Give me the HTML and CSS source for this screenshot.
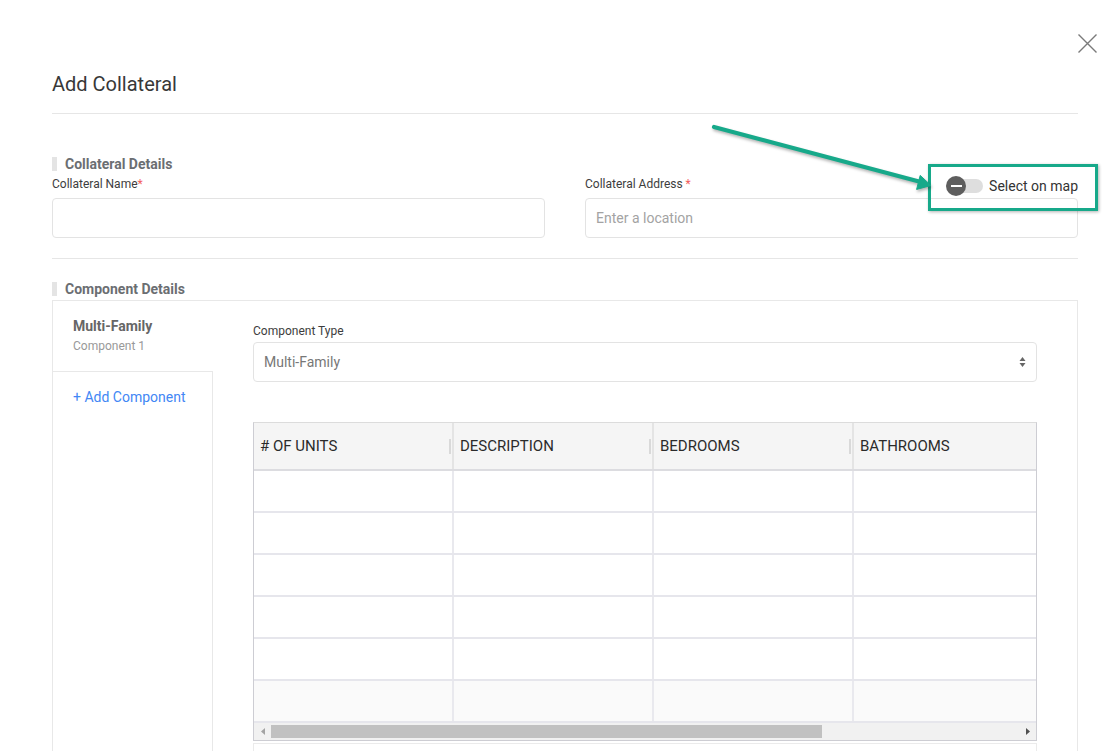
FILE: index.html
```html
<!DOCTYPE html>
<html lang="en">
<head>
<meta charset="utf-8">
<title>Add Collateral</title>
<link rel="stylesheet" href="styles.css">
</head>
<body>
<div class="modal">
  <header class="modal-head">
    <h1 class="modal-title">Add Collateral</h1>
    <button class="close" aria-label="Close">
      <svg width="19" height="19" viewBox="0 0 19 19"><path d="M0.5 0.5 L18.5 18.5 M18.5 0.5 L0.5 18.5" stroke="#7a7a7a" stroke-width="1.4" fill="none"/></svg>
    </button>
  </header>
  <div class="divider"></div>

  <section class="section section-collateral">
    <h2 class="section-title">Collateral Details</h2>
    <div class="field-row">
      <div class="field">
        <div class="label-row">
          <label class="field-label">Collateral Name<span class="req">*</span></label>
        </div>
        <div class="input"></div>
      </div>
      <div class="field">
        <div class="label-row">
          <label class="field-label">Collateral Address <span class="req">*</span></label>
          <div class="map-toggle">
            <span class="switch"><span class="knob"></span></span>
            <span class="toggle-text">Select on map</span>
            <span class="highlight"></span>
          </div>
        </div>
        <div class="input placeholder">Enter a location</div>
      </div>
    </div>
  </section>

  <div class="divider divider-2"></div>

  <section class="section section-components">
    <h2 class="section-title">Component Details</h2>
    <div class="comp-box">
      <nav class="comp-nav">
        <div class="comp-tab">
          <div class="tab-name">Multi-Family</div>
          <div class="tab-sub">Component 1</div>
        </div>
        <div class="comp-nav-rest">
          <a class="add-comp">+ Add Component</a>
        </div>
      </nav>
      <div class="comp-body">
        <label class="field-label">Component Type</label>
        <div class="select">
          <span>Multi-Family</span>
          <svg width="7" height="12" viewBox="0 0 7 12"><path d="M0.5 5 L3.5 1 L6.5 5 Z M0.5 7 L3.5 11 L6.5 7 Z" fill="#666"/></svg>
        </div>
        <div class="grid-wrap">
          <div class="grid-viewport">
            <div class="grid">
              <div class="grid-head">
                <div class="head-cell"><span># OF UNITS</span><i class="handle"></i></div>
                <div class="head-cell"><span>DESCRIPTION</span><i class="handle"></i></div>
                <div class="head-cell"><span>BEDROOMS</span><i class="handle"></i></div>
                <div class="head-cell"><span>BATHROOMS</span><i class="handle"></i></div>
              </div>
              <div class="grid-row"><div class="cell"></div><div class="cell"></div><div class="cell"></div><div class="cell"></div></div>
              <div class="grid-row"><div class="cell"></div><div class="cell"></div><div class="cell"></div><div class="cell"></div></div>
              <div class="grid-row"><div class="cell"></div><div class="cell"></div><div class="cell"></div><div class="cell"></div></div>
              <div class="grid-row"><div class="cell"></div><div class="cell"></div><div class="cell"></div><div class="cell"></div></div>
              <div class="grid-row"><div class="cell"></div><div class="cell"></div><div class="cell"></div><div class="cell"></div></div>
              <div class="grid-row grid-row-hover"><div class="cell"></div><div class="cell"></div><div class="cell"></div><div class="cell"></div></div>
            </div>
          </div>
          <div class="hscroll">
            <span class="sb-btn"><svg width="4" height="7" viewBox="0 0 4 7"><path d="M4 0 L0 3.5 L4 7 Z" fill="#a3a3a3"/></svg></span>
            <span class="sb-thumb"></span>
            <span class="sb-space"></span>
            <span class="sb-btn"><svg width="4" height="7" viewBox="0 0 4 7"><path d="M0 0 L4 3.5 L0 7 Z" fill="#505050"/></svg></span>
          </div>
        </div>
        <div class="below-box"></div>
      </div>
    </div>
  </section>

  <svg class="annotation" width="1112" height="751" viewBox="0 0 1112 751">
    <g fill="#17a98a" stroke="#17a98a">
      <line x1="714" y1="127" x2="919" y2="181.5" stroke-width="4.2" stroke-linecap="round"/>
      <polygon points="931,185.5 916.6,189.4 920.2,175.4" stroke-width="1" stroke-linejoin="round"/>
    </g>
  </svg>
</div>
</body>
</html>
```

FILE: styles.css
```css
* { box-sizing: border-box; }

html, body {
  margin: 0;
  background: #fff;
}

body {
  font-family: Roboto, "Liberation Sans", Arial, sans-serif;
  color: #333;
  overflow: hidden;
}

.modal {
  position: relative;
  height: 751px;
  overflow: hidden;
  padding: 0 34px 0 52px;
}

.modal-head {
  display: flex;
  justify-content: space-between;
  align-items: flex-start;
  padding-top: 34px;
  margin-right: -19px;
}

.modal-title {
  margin: 38px 0 0;
  font-size: 20px;
  line-height: 24px;
  font-weight: 400;
  color: #383838;
}

.close {
  width: 19px;
  height: 19px;
  padding: 0;
  border: 0;
  background: none;
  cursor: pointer;
}

.close svg { display: block; }

.divider {
  height: 1px;
  background: #e6e6e6;
  margin-top: 17px;
}

.divider-2 { margin-top: 20px; }

.section-title {
  display: flex;
  align-items: center;
  margin: 0;
  font-size: 14px;
  line-height: 20px;
  font-weight: 700;
  color: #6b6e72;
}

.section-title::before {
  content: "";
  width: 5px;
  height: 14px;
  margin-right: 8px;
  background: #e4e4e4;
}

.section-collateral { margin-top: 40px; }

.field-row {
  display: grid;
  grid-template-columns: 1fr 1fr;
  column-gap: 40px;
  margin-top: 2px;
}

.label-row {
  display: flex;
  justify-content: space-between;
  align-items: flex-start;
  height: 16px;
}

.field-label {
  display: block;
  font-size: 12px;
  line-height: 16px;
  color: #3d3d3d;
}

.req { color: #f25c5c; }

.input {
  margin-top: 6px;
  height: 40px;
  border: 1px solid #e3e3e3;
  border-radius: 4px;
  padding: 0 10px;
  font-size: 14px;
  line-height: 38px;
  color: #333;
}

.placeholder { color: #a3a3a3; }

.map-toggle {
  position: relative;
  display: flex;
  align-items: center;
  height: 20px;
  font-size: 14px;
  line-height: 20px;
  color: #333;
}

.switch {
  display: flex;
  align-items: center;
  width: 35px;
  height: 14px;
  margin-left: 2px;
  margin-right: 6px;
  border-radius: 7px;
  background: #dedede;
}

.knob {
  display: flex;
  align-items: center;
  justify-content: center;
  flex-shrink: 0;
  width: 20px;
  height: 20px;
  margin-left: -2px;
  border-radius: 50%;
  background: #5e5e5e;
}

.knob::after {
  content: "";
  width: 11px;
  height: 2px;
  background: #fff;
}

.highlight {
  position: absolute;
  top: -12px;
  left: -18px;
  right: -20px;
  bottom: -15px;
  border: 3px solid #17a98a;
  box-shadow: 1px 1px 3px rgba(0, 0, 0, 0.3);
}

.section-components { margin-top: 20px; }

.comp-box {
  display: flex;
  height: 480px;
  margin-top: 1px;
  border: 1px solid #e8e8e8;
}

.comp-nav {
  display: flex;
  flex-direction: column;
  width: 160px;
  flex-shrink: 0;
}

.comp-tab { padding: 15px 20px 17px; }

.tab-name {
  font-size: 14px;
  line-height: 20px;
  font-weight: 700;
  color: #666;
}

.tab-sub {
  margin-top: 2px;
  font-size: 12px;
  line-height: 16px;
  color: #999;
}

.comp-nav-rest {
  flex: 1;
  border-top: 1px solid #e8e8e8;
  border-right: 1px solid #e8e8e8;
  padding: 15px 20px;
}

.add-comp {
  font-size: 14px;
  line-height: 20px;
  color: #4287f5;
  text-decoration: none;
}

.comp-body {
  flex: 1;
  min-width: 0;
  padding: 22px 40px 0;
}

.select {
  display: flex;
  align-items: center;
  justify-content: space-between;
  margin-top: 3px;
  height: 40px;
  padding: 0 10px;
  border: 1px solid #e3e3e3;
  border-radius: 4px;
  font-size: 14px;
  color: #777;
}

.select svg { display: block; }

.grid-wrap {
  margin-top: 40px;
  border: 1px solid #cdcdd3;
  border-top-color: #dcdcdc;
}

.grid-viewport { overflow: hidden; }

.grid { width: 800px; }

.grid-head {
  display: grid;
  grid-template-columns: repeat(4, 200px);
  height: 48px;
  background: #f5f5f5;
  border-bottom: 2px solid #dcdce0;
}

.head-cell {
  display: flex;
  align-items: center;
  justify-content: space-between;
  padding-left: 6px;
  padding-right: 1px;
  border-right: 2px solid #e4e4e4;
  font-size: 15px;
  line-height: 20px;
  color: #2b2b2b;
}

.handle {
  width: 2px;
  height: 15px;
  background: #d9d9d9;
}

.grid-row {
  display: grid;
  grid-template-columns: repeat(4, 200px);
  height: 42px;
  border-bottom: 2px solid #e6e6ec;
}

.grid-row-hover { background: #fafafa; }

.cell { border-right: 2px solid #e9e9ee; }

.hscroll {
  display: flex;
  height: 17px;
  background: #f1f1f1;
}

.sb-btn {
  display: flex;
  align-items: center;
  justify-content: center;
  width: 17px;
  flex-shrink: 0;
}

.sb-thumb {
  width: 551px;
  margin: 2px 0;
  background: #c1c1c1;
}

.sb-space { flex: 1; }

.below-box {
  margin-top: 2px;
  height: 60px;
  border: 1px solid #ebebeb;
  border-bottom: 0;
}

.annotation {
  position: absolute;
  left: 0;
  top: 0;
  pointer-events: none;
  filter: drop-shadow(1px 2px 1.5px rgba(0, 0, 0, 0.3));
}
```
